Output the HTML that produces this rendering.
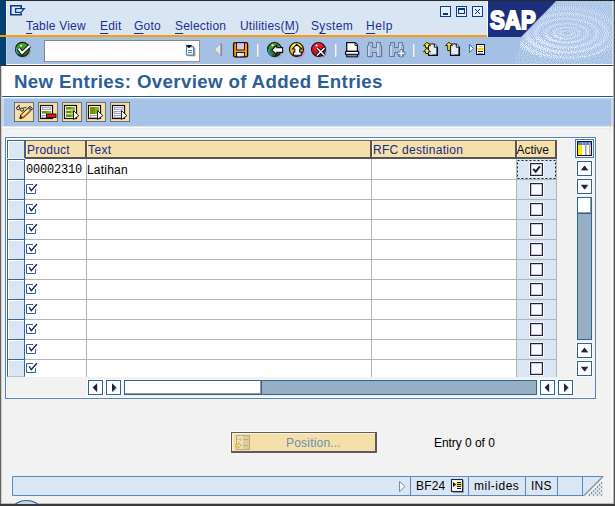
<!DOCTYPE html>
<html><head><meta charset="utf-8">
<style>
html,body{margin:0;padding:0}
body{width:615px;height:506px;position:relative;overflow:hidden;background:#f2f2f2;font-family:"Liberation Sans",sans-serif;font-size:12px;line-height:14px;color:#000;letter-spacing:0.200px}
.a{position:absolute}
.m{position:absolute;top:19px;color:#1a3090;white-space:nowrap}
.m u{text-decoration:underline;text-decoration-thickness:1px;text-underline-offset:3px}
.hc{position:absolute;top:140px;height:16px;background:#f4e0a8;border-top:1px solid #6a6a6a;border-bottom:2px solid #555;border-right:2px solid #555;padding-left:1px;box-shadow:inset 1px 0 0 #fff3cf;color:#16298c;box-sizing:content-box}
.hc span{position:absolute;left:2px;top:2px;white-space:nowrap}
.sel{position:absolute;left:7px;width:16px;height:19px;background:#dbe6f4;border:1px solid #34679b;border-bottom:0;box-shadow:inset 1px 1px 0 #fff}
.gl{position:absolute;background:#b4b4b4}
.cb{position:absolute;left:530px;width:11px;height:11px;background:#f8faff;border:1px solid #23233f;box-shadow:0 0 0 1px rgba(255,255,255,.75),inset 0 0 0 .5px #9a9aae}
.sb{position:absolute;width:13px;height:13px;background:#fff;border:1px solid #2f6496;box-shadow:0 0 0 1px #fafafa}
.tb{position:absolute;top:102px;width:18px;height:18px;background:#f4e0a8;border:1px solid #6e6e6e}
.ck{position:absolute;left:27px}
.st{position:absolute;top:477px;width:1px;height:18px;background:#5f88b8}
</style></head><body>

<!-- top chrome -->
<div class="a" style="left:0;top:0;width:615px;height:1px;background:#2b2b2b"></div>
<div class="a" style="left:6px;top:1px;width:609px;height:34px;background:#dae5f3"></div>
<div class="a" style="left:6px;top:37px;width:609px;height:27px;background:#a5c0e5"></div>
<div class="a" style="left:6px;top:64px;width:609px;height:1px;background:#fff"></div>
<div class="a" style="left:0;top:0;width:6px;height:65px;background:#03406f"></div>
<div class="a" style="left:6px;top:1px;width:1px;height:34px;background:#eef4fb"></div>
<div class="a" style="left:6px;top:37px;width:1px;height:27px;background:#bcd1ee"></div>
<div class="a" style="left:0;top:35px;width:488px;height:2px;background:#f99d09"></div>
<div class="a" style="left:0;top:65px;width:615px;height:1px;background:#3c3c3c"></div>

<!-- menu icon -->
<svg class="a" style="left:9px;top:4px" width="18" height="14" viewBox="0 0 18 14"><path d="M12.200 4V1.800H1.800V10.700H12.200V9" fill="none" stroke="#0c3b8c" stroke-width="1.600"/><path d="M6.600 4.600H15.200L12 8.400H6.600Z" fill="#e8eef8" stroke="#0c3b8c" stroke-width="1.300"/></svg>

<!-- menu -->
<div class="m" style="left:26px"><u>T</u>able View</div>
<div class="m" style="left:100px"><u>E</u>dit</div>
<div class="m" style="left:134px"><u>G</u>oto</div>
<div class="m" style="left:175px"><u>S</u>election</div>
<div class="m" style="left:240px">Utilities(<u>M</u>)</div>
<div class="m" style="left:311px;letter-spacing:.35px">S<u>y</u>stem</div>
<div class="m" style="left:366px;letter-spacing:.55px"><u>H</u>elp</div>

<!-- window buttons -->
<svg class="a" style="left:440px;top:6px" width="46" height="13" viewBox="0 0 46 13">
<g fill="#e7eef8" stroke="#0f3f8c" stroke-width="1"><rect x=".5" y=".5" width="10" height="10"/><rect x="16.500" y=".5" width="10" height="10"/><rect x="32.500" y=".5" width="10" height="10"/></g>
<rect x="3" y="7" width="5" height="2" fill="#0f3380"/>
<rect x="18.500" y="2.500" width="6" height="5" fill="#e2eaf6" stroke="#0f3380"/><rect x="18" y="2" width="7" height="2" fill="#0f3380"/>
<path d="M35 3l5 5M40 3l-5 5" stroke="#0f3380" stroke-width="1"/>
</svg>
<div class="a" style="left:487px;top:1px;width:1px;height:36px;background:#f4f8fd"></div>

<!-- SAP logo + ripples -->
<svg class="a" style="left:488px;top:1px" width="127" height="64" viewBox="0 0 127 64">
<defs><linearGradient id="rg" x1="0" y1="0" x2="1" y2="0"><stop offset="0" stop-color="#a5c0e5"/><stop offset="0.200" stop-color="#aac4e7"/><stop offset="1" stop-color="#a9c3e6"/></linearGradient></defs>
<rect x="0" y="0" width="127" height="63" fill="#a5c0e5"/>
<polygon points="68,0 127,0 127,63 22,63 33,36" fill="url(#rg)"/>
<path d="M71 1.5h1M73 1.5h1M75 1.5h1M77 1.5h1M79 1.5h1M81 1.5h1M83 1.5h1M85 1.5h1M87 1.5h1M89 1.5h1M91 1.5h1M93 1.5h1M95 1.5h1M97 1.5h1M99 1.5h1M101 1.5h1M103 1.5h1M105 1.5h1M107 1.5h1M109 1.5h1M111 1.5h1M113 1.5h1M115 1.5h1M117 1.5h1M119 1.5h1M121 1.5h1M123 1.5h1M125 1.5h1M126 2.5h1M69 3.5h1M71 3.5h1M73 3.5h1M75 3.5h1M77 3.5h1M79 3.5h1M81 3.5h1M83 3.5h1M85 3.5h1M87 3.5h1M89 3.5h1M91 3.5h1M93 3.5h1M96 3.5h1M98 3.5h1M100 3.5h1M102 3.5h1M104 3.5h1M106 3.5h1M108 3.5h1M110 3.5h1M112 3.5h1M115 3.5h1M117 3.5h1M119 3.5h1M121 3.5h1M123 3.5h1M67 4.5h1M94 4.5h1M114 4.5h1M124 4.5h1M69 5.5h1M71 5.5h1M73 5.5h1M75 5.5h1M77 5.5h1M79 5.5h1M81 5.5h1M83 5.5h1M85 5.5h1M87 5.5h1M89 5.5h1M91 5.5h1M96 5.5h1M99 5.5h1M102 5.5h1M104 5.5h1M107 5.5h1M109 5.5h1M112 5.5h1M116 5.5h1M119 5.5h1M121 5.5h1M126 5.5h1M65 6.5h1M67 6.5h1M69 6.5h1M71 6.5h1M73 6.5h1M75 6.5h1M77 6.5h1M79 6.5h1M81 6.5h1M83 6.5h1M85 6.5h1M87 6.5h1M90 6.5h1M92 6.5h1M94 6.5h1M97 6.5h1M100 6.5h1M105 6.5h1M110 6.5h1M114 6.5h1M123 6.5h1M63 7.5h1M65 7.5h1M67 7.5h1M69 7.5h1M71 7.5h1M73 7.5h1M75 7.5h1M77 7.5h2M80 7.5h2M83 7.5h1M85 7.5h1M87 7.5h2M90 7.5h1M93 7.5h1M95 7.5h1M98 7.5h1M102 7.5h1M107 7.5h1M116 7.5h1M118 7.5h1M121 7.5h1M125 7.5h1M61 8.5h1M63 8.5h1M65 8.5h1M67 8.5h2M70 8.5h1M72 8.5h1M74 8.5h2M77 8.5h1M79 8.5h1M81 8.5h1M83 8.5h2M86 8.5h1M88 8.5h1M90 8.5h3M94 8.5h1M96 8.5h1M98 8.5h1M100 8.5h1M103 8.5h1M105 8.5h1M108 8.5h1M111 8.5h1M113 8.5h1M123 8.5h1M61 9.5h1M63 9.5h1M65 9.5h1M67 9.5h1M69 9.5h1M71 9.5h1M73 9.5h1M76 9.5h1M78 9.5h1M81 9.5h1M85 9.5h1M87 9.5h1M89 9.5h1M92 9.5h1M94 9.5h1M96 9.5h2M99 9.5h1M101 9.5h2M104 9.5h1M106 9.5h1M110 9.5h1M115 9.5h1M117 9.5h1M119 9.5h1M121 9.5h1M126 9.5h1M60 10.5h1M63 10.5h1M65 10.5h1M68 10.5h1M71 10.5h1M74 10.5h1M76 10.5h1M79 10.5h1M82 10.5h1M84 10.5h1M88 10.5h1M90 10.5h1M93 10.5h1M95 10.5h1M97 10.5h1M99 10.5h2M102 10.5h1M104 10.5h1M107 10.5h1M109 10.5h1M112 10.5h1M123 10.5h1M59 11.5h1M61 11.5h1M64 11.5h1M66 11.5h1M69 11.5h1M71 11.5h1M73 11.5h1M75 11.5h1M77 11.5h1M79 11.5h1M81 11.5h1M83 11.5h1M85 11.5h1M87 11.5h1M91 11.5h1M94 11.5h1M96 11.5h1M98 11.5h1M101 11.5h1M103 11.5h1M105 11.5h2M108 11.5h1M110 11.5h1M113 11.5h1M115 11.5h1M117 11.5h1M120 11.5h1M124 11.5h1M62 12.5h1M64 12.5h1M66 12.5h3M70 12.5h15M86 12.5h5M92 12.5h1M94 12.5h1M99 12.5h1M101 12.5h1M103 12.5h2M106 12.5h1M108 12.5h2M111 12.5h1M113 12.5h1M119 12.5h1M122 12.5h1M57 13.5h1M59 13.5h3M63 13.5h3M67 13.5h4M72 13.5h1M74 13.5h2M77 13.5h1M79 13.5h3M83 13.5h4M88 13.5h6M95 13.5h3M99 13.5h1M102 13.5h1M105 13.5h1M107 13.5h1M109 13.5h1M111 13.5h2M114 13.5h1M116 13.5h1M118 13.5h1M125 13.5h1M56 14.5h1M58 14.5h2M61 14.5h7M69 14.5h1M71 14.5h3M75 14.5h1M77 14.5h2M81 14.5h1M83 14.5h1M85 14.5h1M87 14.5h2M90 14.5h1M92 14.5h4M97 14.5h2M100 14.5h1M102 14.5h1M104 14.5h1M107 14.5h1M109 14.5h1M111 14.5h1M113 14.5h1M115 14.5h1M117 14.5h1M120 14.5h1M123 14.5h1M54 15.5h1M56 15.5h7M64 15.5h1M67 15.5h1M69 15.5h1M74 15.5h1M79 15.5h1M81 15.5h1M84 15.5h1M86 15.5h1M89 15.5h1M91 15.5h1M93 15.5h1M95 15.5h7M103 15.5h1M105 15.5h1M108 15.5h1M111 15.5h1M113 15.5h1M115 15.5h1M117 15.5h1M119 15.5h1M122 15.5h1M126 15.5h1M53 16.5h1M55 16.5h3M59 16.5h1M61 16.5h1M63 16.5h1M65 16.5h1M68 16.5h1M70 16.5h2M73 16.5h1M75 16.5h3M79 16.5h1M82 16.5h1M84 16.5h1M87 16.5h1M89 16.5h1M91 16.5h1M94 16.5h1M96 16.5h1M98 16.5h1M100 16.5h4M105 16.5h1M107 16.5h1M109 16.5h1M112 16.5h1M114 16.5h2M117 16.5h1M119 16.5h1M121 16.5h1M124 16.5h1M52 17.5h4M57 17.5h1M59 17.5h1M61 17.5h1M65 17.5h1M67 17.5h1M69 17.5h1M71 17.5h3M75 17.5h1M77 17.5h7M85 17.5h2M88 17.5h1M90 17.5h1M92 17.5h1M94 17.5h1M96 17.5h1M98 17.5h1M100 17.5h1M102 17.5h6M110 17.5h1M112 17.5h1M115 17.5h1M117 17.5h2M120 17.5h1M122 17.5h1M52 18.5h1M55 18.5h1M57 18.5h1M59 18.5h1M62 18.5h3M66 18.5h6M73 18.5h5M79 18.5h2M82 18.5h8M91 18.5h1M93 18.5h1M95 18.5h1M98 18.5h1M100 18.5h1M102 18.5h1M104 18.5h2M107 18.5h3M111 18.5h1M114 18.5h1M116 18.5h1M118 18.5h1M120 18.5h1M122 18.5h1M124 18.5h1M126 18.5h1M51 19.5h1M53 19.5h1M55 19.5h1M58 19.5h1M60 19.5h3M64 19.5h4M69 19.5h1M71 19.5h2M74 19.5h1M77 19.5h1M81 19.5h1M85 19.5h1M87 19.5h1M89 19.5h6M96 19.5h2M99 19.5h1M101 19.5h1M103 19.5h1M105 19.5h4M110 19.5h1M112 19.5h1M115 19.5h1M118 19.5h1M120 19.5h2M123 19.5h1M125 19.5h1M51 20.5h1M54 20.5h1M56 20.5h2M59 20.5h6M66 20.5h1M68 20.5h1M75 20.5h1M79 20.5h1M82 20.5h1M84 20.5h1M88 20.5h1M90 20.5h1M92 20.5h1M94 20.5h4M99 20.5h1M101 20.5h1M104 20.5h1M107 20.5h7M116 20.5h1M118 20.5h1M120 20.5h1M122 20.5h1M124 20.5h1M49 21.5h1M52 21.5h1M54 21.5h2M57 21.5h4M63 21.5h1M69 21.5h1M71 21.5h1M73 21.5h1M76 21.5h1M78 21.5h1M80 21.5h1M83 21.5h1M86 21.5h1M92 21.5h1M94 21.5h1M96 21.5h5M102 21.5h1M105 21.5h1M108 21.5h1M110 21.5h2M113 21.5h2M116 21.5h1M120 21.5h1M122 21.5h2M125 21.5h1M50 22.5h1M52 22.5h1M54 22.5h5M60 22.5h1M62 22.5h1M65 22.5h1M67 22.5h1M69 22.5h1M71 22.5h2M74 22.5h9M84 22.5h2M87 22.5h2M90 22.5h1M94 22.5h1M97 22.5h1M99 22.5h6M106 22.5h1M108 22.5h1M110 22.5h3M114 22.5h2M117 22.5h1M119 22.5h1M121 22.5h1M123 22.5h1M125 22.5h2M48 23.5h1M51 23.5h4M56 23.5h1M58 23.5h1M61 23.5h1M64 23.5h1M66 23.5h9M76 23.5h1M78 23.5h1M80 23.5h1M82 23.5h8M91 23.5h2M96 23.5h1M99 23.5h1M101 23.5h1M103 23.5h2M106 23.5h1M109 23.5h1M111 23.5h4M116 23.5h1M118 23.5h1M122 23.5h1M124 23.5h1M126 23.5h1M47 24.5h1M49 24.5h2M52 24.5h4M57 24.5h1M60 24.5h1M63 24.5h5M69 24.5h1M72 24.5h1M75 24.5h1M77 24.5h1M80 24.5h1M82 24.5h1M86 24.5h1M88 24.5h1M90 24.5h2M93 24.5h2M97 24.5h1M100 24.5h1M102 24.5h4M107 24.5h2M111 24.5h1M113 24.5h4M118 24.5h1M120 24.5h1M123 24.5h1M125 24.5h1M46 25.5h1M49 25.5h4M54 25.5h1M58 25.5h1M61 25.5h3M65 25.5h1M67 25.5h1M69 25.5h1M71 25.5h1M74 25.5h1M78 25.5h1M83 25.5h1M85 25.5h1M88 25.5h2M91 25.5h5M98 25.5h1M101 25.5h1M103 25.5h1M105 25.5h3M109 25.5h1M112 25.5h1M114 25.5h1M116 25.5h2M119 25.5h1M121 25.5h1M123 25.5h1M125 25.5h1M44 26.5h1M47 26.5h2M50 26.5h3M55 26.5h1M57 26.5h1M59 26.5h6M66 26.5h1M72 26.5h2M75 26.5h9M85 26.5h1M87 26.5h1M90 26.5h1M92 26.5h1M94 26.5h4M99 26.5h1M102 26.5h1M104 26.5h3M108 26.5h1M110 26.5h1M112 26.5h1M114 26.5h5M120 26.5h1M124 26.5h1M126 26.5h1M45 27.5h1M47 27.5h4M52 27.5h1M54 27.5h1M57 27.5h1M59 27.5h3M63 27.5h1M67 27.5h9M77 27.5h1M79 27.5h1M81 27.5h1M83 27.5h4M88 27.5h1M91 27.5h1M93 27.5h1M95 27.5h2M98 27.5h1M100 27.5h1M103 27.5h1M105 27.5h1M107 27.5h3M111 27.5h1M113 27.5h1M115 27.5h2M118 27.5h2M121 27.5h1M123 27.5h1M125 27.5h1M42 28.5h1M44 28.5h1M46 28.5h1M48 28.5h3M52 28.5h1M55 28.5h1M57 28.5h3M61 28.5h1M64 28.5h1M66 28.5h1M68 28.5h3M72 28.5h1M80 28.5h1M83 28.5h1M86 28.5h4M93 28.5h1M95 28.5h1M97 28.5h3M101 28.5h1M104 28.5h1M106 28.5h4M111 28.5h1M114 28.5h1M116 28.5h3M120 28.5h1M124 28.5h1M126 28.5h1M42 29.5h1M45 29.5h4M50 29.5h2M54 29.5h1M56 29.5h2M59 29.5h2M62 29.5h1M64 29.5h1M66 29.5h3M70 29.5h1M73 29.5h1M75 29.5h5M81 29.5h2M84 29.5h1M87 29.5h1M89 29.5h3M95 29.5h1M97 29.5h2M100 29.5h1M102 29.5h1M105 29.5h1M107 29.5h1M109 29.5h2M112 29.5h1M114 29.5h2M117 29.5h3M121 29.5h2M125 29.5h1M40 30.5h2M43 30.5h1M45 30.5h1M47 30.5h3M51 30.5h1M55 30.5h1M57 30.5h3M61 30.5h1M64 30.5h4M69 30.5h1M71 30.5h6M78 30.5h1M80 30.5h2M83 30.5h2M86 30.5h1M88 30.5h6M96 30.5h1M98 30.5h3M102 30.5h1M105 30.5h1M107 30.5h4M112 30.5h1M115 30.5h2M118 30.5h2M123 30.5h1M126 30.5h1M39 31.5h1M41 31.5h1M44 31.5h1M46 31.5h4M51 31.5h1M53 31.5h1M55 31.5h5M61 31.5h1M63 31.5h1M65 31.5h3M69 31.5h2M72 31.5h2M79 31.5h1M82 31.5h1M84 31.5h3M89 31.5h1M91 31.5h1M93 31.5h1M95 31.5h1M97 31.5h3M101 31.5h1M104 31.5h1M106 31.5h3M110 31.5h2M113 31.5h1M115 31.5h1M117 31.5h5M124 31.5h1M126 31.5h1M38 32.5h3M42 32.5h1M44 32.5h2M47 32.5h2M50 32.5h1M54 32.5h1M56 32.5h2M59 32.5h1M62 32.5h1M64 32.5h3M68 32.5h1M70 32.5h4M75 32.5h1M77 32.5h1M82 32.5h3M86 32.5h2M89 32.5h4M96 32.5h1M98 32.5h3M102 32.5h1M105 32.5h1M107 32.5h3M111 32.5h1M114 32.5h1M116 32.5h3M120 32.5h1M122 32.5h1M125 32.5h1M37 33.5h1M39 33.5h2M42 33.5h1M45 33.5h7M53 33.5h1M55 33.5h1M57 33.5h4M63 33.5h1M65 33.5h4M70 33.5h1M72 33.5h4M79 33.5h1M81 33.5h1M83 33.5h3M87 33.5h1M89 33.5h1M91 33.5h1M93 33.5h1M95 33.5h1M97 33.5h1M99 33.5h2M102 33.5h1M106 33.5h1M108 33.5h3M112 33.5h1M114 33.5h1M116 33.5h3M120 33.5h1M123 33.5h1M126 33.5h1M37 34.5h5M43 34.5h1M45 34.5h1M47 34.5h2M50 34.5h1M52 34.5h1M55 34.5h5M61 34.5h1M64 34.5h3M68 34.5h2M71 34.5h1M73 34.5h11M85 34.5h1M87 34.5h6M95 34.5h1M97 34.5h4M103 34.5h1M105 34.5h1M107 34.5h2M110 34.5h1M112 34.5h1M114 34.5h1M116 34.5h1M118 34.5h3M122 34.5h1M124 34.5h1M126 34.5h1M36 35.5h2M39 35.5h2M42 35.5h1M44 35.5h1M46 35.5h1M48 35.5h3M52 35.5h1M57 35.5h1M59 35.5h2M62 35.5h1M65 35.5h1M67 35.5h1M69 35.5h2M72 35.5h1M76 35.5h1M78 35.5h1M80 35.5h1M83 35.5h1M86 35.5h2M89 35.5h2M93 35.5h1M95 35.5h4M100 35.5h1M102 35.5h1M105 35.5h6M112 35.5h1M114 35.5h5M120 35.5h1M122 35.5h1M125 35.5h1M35 36.5h1M37 36.5h3M41 36.5h2M44 36.5h1M46 36.5h2M49 36.5h2M53 36.5h1M55 36.5h1M57 36.5h1M59 36.5h1M61 36.5h2M67 36.5h3M71 36.5h1M73 36.5h2M76 36.5h1M79 36.5h1M81 36.5h2M84 36.5h6M91 36.5h1M93 36.5h1M95 36.5h1M97 36.5h2M100 36.5h1M103 36.5h1M105 36.5h1M107 36.5h2M110 36.5h1M113 36.5h1M116 36.5h4M121 36.5h1M124 36.5h1M126 36.5h1M37 37.5h1M39 37.5h2M42 37.5h2M45 37.5h1M47 37.5h1M49 37.5h4M54 37.5h1M57 37.5h1M60 37.5h1M62 37.5h1M64 37.5h1M70 37.5h1M72 37.5h2M75 37.5h12M90 37.5h1M93 37.5h5M99 37.5h1M102 37.5h1M104 37.5h5M110 37.5h1M112 37.5h1M114 37.5h4M119 37.5h1M122 37.5h1M125 37.5h1M34 38.5h1M36 38.5h1M39 38.5h2M42 38.5h2M46 38.5h1M49 38.5h1M51 38.5h2M54 38.5h1M56 38.5h1M59 38.5h4M64 38.5h3M68 38.5h1M71 38.5h1M74 38.5h1M76 38.5h4M81 38.5h1M83 38.5h1M87 38.5h1M89 38.5h1M91 38.5h5M97 38.5h1M100 38.5h1M103 38.5h1M105 38.5h2M108 38.5h1M110 38.5h1M112 38.5h1M114 38.5h2M117 38.5h2M120 38.5h1M123 38.5h1M125 38.5h2M34 39.5h1M37 39.5h1M39 39.5h7M48 39.5h1M50 39.5h1M53 39.5h2M57 39.5h1M62 39.5h2M65 39.5h1M67 39.5h1M69 39.5h1M71 39.5h1M73 39.5h1M82 39.5h1M84 39.5h1M86 39.5h1M88 39.5h6M95 39.5h1M97 39.5h1M99 39.5h1M101 39.5h7M109 39.5h1M111 39.5h1M113 39.5h5M119 39.5h1M121 39.5h1M123 39.5h1M125 39.5h1M32 40.5h1M38 40.5h1M41 40.5h1M43 40.5h1M46 40.5h1M48 40.5h1M50 40.5h1M52 40.5h2M55 40.5h2M58 40.5h1M60 40.5h1M64 40.5h3M68 40.5h2M71 40.5h2M74 40.5h3M79 40.5h3M83 40.5h3M87 40.5h3M91 40.5h1M93 40.5h1M96 40.5h1M100 40.5h1M102 40.5h3M106 40.5h1M108 40.5h1M111 40.5h3M115 40.5h2M118 40.5h1M122 40.5h1M124 40.5h1M126 40.5h1M34 41.5h1M36 41.5h1M38 41.5h1M40 41.5h1M42 41.5h1M44 41.5h3M49 41.5h1M51 41.5h1M53 41.5h2M56 41.5h2M59 41.5h1M62 41.5h1M67 41.5h1M69 41.5h2M72 41.5h1M74 41.5h6M81 41.5h2M84 41.5h4M89 41.5h1M92 41.5h1M95 41.5h1M97 41.5h8M106 41.5h1M109 41.5h2M112 41.5h4M117 41.5h1M120 41.5h1M122 41.5h1M124 41.5h2M32 42.5h1M34 42.5h1M37 42.5h1M40 42.5h1M42 42.5h3M46 42.5h3M50 42.5h1M52 42.5h1M54 42.5h2M57 42.5h3M62 42.5h1M64 42.5h1M68 42.5h1M72 42.5h1M74 42.5h1M78 42.5h2M81 42.5h1M83 42.5h1M88 42.5h1M93 42.5h1M95 42.5h1M99 42.5h2M103 42.5h1M106 42.5h1M108 42.5h1M110 42.5h4M115 42.5h1M118 42.5h1M120 42.5h1M122 42.5h1M124 42.5h1M126 42.5h1M32 43.5h1M34 43.5h1M37 43.5h1M40 43.5h1M44 43.5h2M47 43.5h1M50 43.5h1M53 43.5h1M55 43.5h1M57 43.5h1M59 43.5h3M63 43.5h1M65 43.5h2M70 43.5h1M75 43.5h1M80 43.5h1M84 43.5h1M86 43.5h1M90 43.5h2M93 43.5h2M96 43.5h5M102 43.5h1M104 43.5h1M106 43.5h5M112 43.5h1M114 43.5h1M116 43.5h1M119 43.5h1M121 43.5h1M123 43.5h1M125 43.5h1M32 44.5h1M34 44.5h1M38 44.5h1M41 44.5h1M43 44.5h1M46 44.5h3M50 44.5h1M53 44.5h1M56 44.5h1M58 44.5h1M60 44.5h1M62 44.5h4M67 44.5h1M69 44.5h1M71 44.5h2M74 44.5h1M77 44.5h1M79 44.5h1M82 44.5h1M85 44.5h1M87 44.5h3M91 44.5h2M94 44.5h4M99 44.5h1M101 44.5h1M103 44.5h1M105 44.5h1M108 44.5h3M112 44.5h2M115 44.5h1M117 44.5h1M119 44.5h1M121 44.5h2M124 44.5h1M126 44.5h1M35 45.5h2M38 45.5h2M42 45.5h1M44 45.5h1M46 45.5h1M48 45.5h5M54 45.5h1M61 45.5h1M64 45.5h3M68 45.5h2M71 45.5h2M75 45.5h4M80 45.5h9M90 45.5h4M95 45.5h1M98 45.5h1M100 45.5h1M102 45.5h1M104 45.5h5M110 45.5h2M117 45.5h1M121 45.5h1M123 45.5h1M32 46.5h1M37 46.5h1M39 46.5h2M45 46.5h1M47 46.5h2M50 46.5h1M52 46.5h2M55 46.5h1M57 46.5h2M60 46.5h1M62 46.5h1M66 46.5h1M68 46.5h8M77 46.5h6M84 46.5h3M88 46.5h3M92 46.5h1M94 46.5h1M96 46.5h1M98 46.5h1M100 46.5h1M102 46.5h3M106 46.5h1M108 46.5h2M112 46.5h1M114 46.5h2M119 46.5h2M122 46.5h1M125 46.5h1M34 47.5h1M36 47.5h1M38 47.5h1M40 47.5h1M42 47.5h1M44 47.5h1M48 47.5h1M50 47.5h2M53 47.5h3M57 47.5h2M60 47.5h1M62 47.5h1M64 47.5h1M69 47.5h1M72 47.5h1M75 47.5h1M77 47.5h1M79 47.5h1M82 47.5h1M84 47.5h1M86 47.5h1M88 47.5h1M91 47.5h1M94 47.5h1M96 47.5h1M98 47.5h5M104 47.5h1M106 47.5h2M110 47.5h1M113 47.5h1M116 47.5h3M121 47.5h1M33 48.5h1M38 48.5h1M41 48.5h1M47 48.5h1M50 48.5h1M52 48.5h1M55 48.5h2M58 48.5h3M63 48.5h1M65 48.5h1M67 48.5h1M70 48.5h1M72 48.5h1M75 48.5h1M77 48.5h1M80 48.5h1M82 48.5h1M86 48.5h1M89 48.5h1M92 48.5h2M95 48.5h5M101 48.5h1M103 48.5h1M105 48.5h1M108 48.5h1M111 48.5h1M113 48.5h1M115 48.5h2M119 48.5h1M122 48.5h1M124 48.5h1M31 49.5h1M40 49.5h1M42 49.5h2M45 49.5h1M47 49.5h1M53 49.5h1M55 49.5h1M57 49.5h2M60 49.5h2M63 49.5h1M65 49.5h3M69 49.5h1M71 49.5h1M73 49.5h1M75 49.5h1M78 49.5h1M80 49.5h1M83 49.5h2M86 49.5h1M88 49.5h9M99 49.5h1M101 49.5h2M104 49.5h1M107 49.5h1M109 49.5h1M111 49.5h1M114 49.5h1M116 49.5h1M118 49.5h1M120 49.5h1M35 50.5h1M40 50.5h1M42 50.5h1M44 50.5h1M47 50.5h2M50 50.5h1M52 50.5h1M55 50.5h1M59 50.5h1M61 50.5h4M66 50.5h5M72 50.5h8M81 50.5h11M93 50.5h2M97 50.5h2M100 50.5h1M103 50.5h1M106 50.5h1M109 50.5h2M112 50.5h2M115 50.5h1M117 50.5h1M125 50.5h1M37 51.5h1M42 51.5h1M44 51.5h1M53 51.5h1M56 51.5h1M59 51.5h1M63 51.5h1M65 51.5h2M68 51.5h5M74 51.5h2M77 51.5h6M84 51.5h3M88 51.5h1M90 51.5h1M92 51.5h1M95 51.5h1M99 51.5h1M102 51.5h1M104 51.5h1M106 51.5h2M109 51.5h1M111 51.5h1M113 51.5h1M120 51.5h1M123 51.5h1M31 52.5h1M34 52.5h1M39 52.5h1M43 52.5h1M46 52.5h1M48 52.5h2M52 52.5h1M54 52.5h1M56 52.5h1M58 52.5h1M62 52.5h1M65 52.5h1M67 52.5h1M69 52.5h1M71 52.5h1M73 52.5h1M75 52.5h1M77 52.5h1M79 52.5h1M81 52.5h1M83 52.5h1M85 52.5h1M87 52.5h1M89 52.5h1M91 52.5h1M93 52.5h1M96 52.5h1M98 52.5h1M100 52.5h1M102 52.5h1M104 52.5h1M106 52.5h1M110 52.5h1M114 52.5h1M116 52.5h1M41 53.5h1M45 53.5h1M47 53.5h1M50 53.5h2M53 53.5h1M57 53.5h1M59 53.5h1M61 53.5h1M70 53.5h1M74 53.5h1M77 53.5h1M82 53.5h1M84 53.5h1M88 53.5h1M93 53.5h1M95 53.5h1M97 53.5h1M99 53.5h1M101 53.5h1M103 53.5h2M106 53.5h2M109 53.5h1M111 53.5h1M119 53.5h1M30 54.5h1M33 54.5h1M36 54.5h1M39 54.5h1M49 54.5h1M53 54.5h1M55 54.5h1M57 54.5h1M60 54.5h1M62 54.5h1M64 54.5h2M67 54.5h2M71 54.5h1M73 54.5h1M76 54.5h1M78 54.5h1M80 54.5h1M85 54.5h1M87 54.5h1M89 54.5h2M92 54.5h1M94 54.5h1M96 54.5h1M98 54.5h1M100 54.5h1M103 54.5h1M105 54.5h1M113 54.5h1M117 54.5h1M122 54.5h1M124 54.5h1M44 55.5h1M51 55.5h1M54 55.5h1M57 55.5h2M60 55.5h2M65 55.5h2M69 55.5h1M71 55.5h1M73 55.5h1M75 55.5h1M77 55.5h1M79 55.5h1M81 55.5h3M85 55.5h1M87 55.5h1M91 55.5h1M94 55.5h2M97 55.5h2M100 55.5h1M102 55.5h1M106 55.5h1M108 55.5h1M111 55.5h1M31 56.5h1M36 56.5h1M42 56.5h1M47 56.5h1M53 56.5h1M61 56.5h1M63 56.5h1M67 56.5h1M69 56.5h1M72 56.5h2M76 56.5h1M80 56.5h1M84 56.5h1M86 56.5h1M88 56.5h1M90 56.5h1M92 56.5h1M94 56.5h1M96 56.5h1M99 56.5h1M104 56.5h1M115 56.5h1M119 56.5h1M28 57.5h1M34 57.5h1M39 57.5h1M50 57.5h1M64 57.5h1M66 57.5h1M70 57.5h1M72 57.5h1M74 57.5h1M76 57.5h1M78 57.5h2M81 57.5h2M84 57.5h2M87 57.5h2M90 57.5h1M92 57.5h1M97 57.5h1M102 57.5h1M122 57.5h1M125 57.5h1M44 58.5h1M54 58.5h1M58 58.5h1M71 58.5h1M74 58.5h1M77 58.5h1M80 58.5h1M83 58.5h1M94 58.5h1M100 58.5h1M108 58.5h1M111 58.5h1M113 58.5h1M117 58.5h1M31 59.5h1M35 59.5h1M40 59.5h1M47 59.5h1M52 59.5h1M61 59.5h1M65 59.5h1M67 59.5h1M69 59.5h1M76 59.5h1M86 59.5h1M88 59.5h1M90 59.5h1M105 59.5h1M120 59.5h1M124 59.5h1M27 60.5h1M38 60.5h1M43 60.5h1M50 60.5h1M56 60.5h1M73 60.5h1M79 60.5h1M82 60.5h1M93 60.5h1M96 60.5h1M99 60.5h1M110 60.5h1M115 60.5h1M122 60.5h1M29 61.5h1M33 61.5h1M48 61.5h1M54 61.5h1M59 61.5h1M63 61.5h1M71 61.5h1M86 61.5h1M102 61.5h1M107 61.5h1M118 61.5h1M36 62.5h1M42 62.5h1M46 62.5h1M68 62.5h1M76 62.5h1M84 62.5h1M91 62.5h1M97 62.5h1M105 62.5h1M113 62.5h1" stroke="#cbdcf2" stroke-width="1" fill="none"/><path d="M67 34.5h1M58 35.5h1M68 35.5h1M40 36.5h1M48 36.5h1M51 36.5h1M60 36.5h1M63 36.5h1M66 36.5h1M70 36.5h1M72 36.5h1M58 37.5h1M61 37.5h1M74 37.5h1M38 38.5h1M41 38.5h1M44 38.5h1M48 38.5h1M50 38.5h1M53 38.5h1M63 38.5h1M72 38.5h1M52 39.5h1M56 39.5h1M61 39.5h1M64 39.5h1M66 39.5h1M68 39.5h1M35 40.5h1M40 40.5h1M42 40.5h1M45 40.5h1M51 40.5h1M54 40.5h1M67 40.5h1M70 40.5h1M77 40.5h1M86 40.5h1M90 40.5h1M33 41.5h1M43 41.5h1M48 41.5h1M55 41.5h1M58 41.5h1M71 41.5h1M73 41.5h1M80 41.5h1M83 41.5h1M38 42.5h1M45 42.5h1M53 42.5h1M56 42.5h1M60 42.5h1M76 42.5h1M97 42.5h1M101 42.5h1M33 43.5h1M35 43.5h1M42 43.5h1M46 43.5h1M48 43.5h1M58 43.5h1M62 43.5h1M64 43.5h1M95 43.5h1M111 43.5h1M36 44.5h1M40 44.5h1M45 44.5h1M49 44.5h1M51 44.5h1M59 44.5h1M61 44.5h1M66 44.5h1M68 44.5h1M93 44.5h1M107 44.5h1M33 45.5h1M37 45.5h1M47 45.5h1M53 45.5h1M56 45.5h1M63 45.5h1M70 45.5h1M73 45.5h1M89 45.5h1M119 45.5h1M35 46.5h1M38 46.5h1M42 46.5h1M49 46.5h1M51 46.5h1M54 46.5h1M65 46.5h1M67 46.5h1M76 46.5h1M83 46.5h1M87 46.5h1M105 46.5h1M117 46.5h1M124 46.5h1M39 47.5h1M41 47.5h1M52 47.5h1M56 47.5h1M59 47.5h1M70 47.5h1M74 47.5h1M80 47.5h1M103 47.5h1M36 48.5h1M40 48.5h1M43 48.5h1M45 48.5h1M48 48.5h1M54 48.5h1M57 48.5h1M61 48.5h1M100 48.5h1M114 48.5h1M38 49.5h1M46 49.5h1M52 49.5h1M59 49.5h1M62 49.5h1M64 49.5h1M68 49.5h1M97 49.5h1M112 49.5h1M41 50.5h1M43 50.5h1M45 50.5h1M49 50.5h1M57 50.5h1M65 50.5h1M71 50.5h1M92 50.5h1M95 50.5h1M46 51.5h1M48 51.5h1M51 51.5h1M55 51.5h1M61 51.5h1M67 51.5h1M73 51.5h1M76 51.5h1M83 51.5h1M87 51.5h1M110 51.5h1M44 52.5h1M50 52.5h1M53 52.5h1M70 52.5h1M80 52.5h1M108 52.5h1M48 53.5h1M52 53.5h1M55 53.5h1M58 53.5h1M63 53.5h1M105 53.5h1M56 54.5h1M59 54.5h1M61 54.5h1M66 54.5h1M101 54.5h1M52 55.5h1M63 55.5h1M68 55.5h1M72 55.5h1M89 55.5h1M92 55.5h1M96 55.5h1M56 56.5h1M59 56.5h1M65 56.5h1M70 56.5h1M75 56.5h1M78 56.5h1M82 56.5h1M85 56.5h1M62 57.5h1M68 57.5h1" stroke="#f0f5fc" stroke-width="1" fill="none"/>
<polygon points="0,0 68,0 33,36 0,36" fill="#1b2f7c"/>
<text x="2" y="27.700" font-family="Liberation Sans,sans-serif" font-weight="bold" font-size="26" fill="#fff" stroke="#fff" stroke-width="2.100" stroke-linejoin="miter" textLength="45.800" lengthAdjust="spacingAndGlyphs">SAP</text>
</svg>

<!-- toolbar -->
<div class="a" style="left:44px;top:40px;width:156px;height:22px;background:#fff;border:1px solid #959595;border-top-color:#858585;border-left-color:#858585;box-sizing:border-box"></div>
<svg class="a" style="left:14px;top:41px" width="20" height="18" viewBox="0 0 20 18"><defs><linearGradient id="gg" x1="0" y1="0" x2="0" y2="1"><stop offset="0" stop-color="#56b41e"/><stop offset=".55" stop-color="#2f8a2a"/><stop offset="1" stop-color="#17601e"/></linearGradient></defs><circle cx="10" cy="10.300" r="7" fill="#aea2d8"/><circle cx="8.400" cy="8.400" r="7" fill="url(#gg)" stroke="#0a1a0c" stroke-width="1.100"/><path d="M2.500 7a6 6 0 0 0 2 6" stroke="#2aa0a0" stroke-width="1.400" fill="none"/><circle cx="7" cy="4.800" r="1" fill="#fff"/><path d="M4.700 7.700l3.300 4.400l7.800-7.400" fill="none" stroke="#111" stroke-width="3.800"/><path d="M4.700 7.700l3.300 4.400l7.800-7.400" fill="none" stroke="#fff" stroke-width="2"/></svg>
<svg class="a" style="left:185px;top:44px" width="12" height="13" viewBox="0 0 12 13"><path d="M9.700 3.500v8.200h-7.200" stroke="#8e939c" stroke-width="1.200" fill="none"/><rect x="1.500" y="2.800" width="7" height="8.200" fill="#fff" stroke="#4a7fb5" stroke-width="1.100"/><path d="M3 6.500h4M3 8.500h4" stroke="#4a7fb5"/><path d="M.6 1h6.800l-3.400 3.300z" fill="#0c0c0c"/></svg>
<svg class="a" style="left:213px;top:42px" width="12" height="15" viewBox="0 0 12 15"><path d="M7.500 1.500v12l-6.300-6z" fill="#e6e6e6" stroke="#a8a8a8" stroke-width=".9"/><path d="M8.500 1.500v12.500" stroke="#8c8c94" stroke-width="1.300"/></svg>
<svg class="a" style="left:232px;top:41px" width="17" height="17" viewBox="0 0 17 17"><rect x="1.600" y="1.600" width="14" height="14.300" rx="1.500" fill="#f79d0a" stroke="#140e06" stroke-width="1.300"/><rect x="4.500" y="1.700" width="8" height="7.300" fill="#d9c3e3" stroke="#140e06" stroke-width=".9"/><rect x="4.500" y="11.500" width="8" height="4.300" fill="#e6d6ee" stroke="#140e06" stroke-width=".9"/><rect x="6" y="12.200" width="2.200" height="3" fill="#fff"/></svg>
<div class="a" style="left:257px;top:44px;width:1px;height:13px;background:#f6f6f6"></div><div class="a" style="left:258px;top:44px;width:1px;height:13px;background:#d2d5dc"></div><div class="a" style="left:258px;top:57px;width:1px;height:1px;background:#9aa6b8"></div>
<div class="a" style="left:335px;top:44px;width:1px;height:13px;background:#f6f6f6"></div><div class="a" style="left:336px;top:44px;width:1px;height:13px;background:#d2d5dc"></div><div class="a" style="left:336px;top:57px;width:1px;height:1px;background:#9aa6b8"></div>
<div class="a" style="left:413px;top:44px;width:1px;height:13px;background:#f6f6f6"></div><div class="a" style="left:414px;top:44px;width:1px;height:13px;background:#d2d5dc"></div><div class="a" style="left:414px;top:57px;width:1px;height:1px;background:#9aa6b8"></div>
<!-- back / exit / cancel -->
<svg class="a" style="left:266px;top:41px" width="20" height="18" viewBox="0 0 20 18"><defs><linearGradient id="g1" x1="0" y1="0" x2="0" y2="1"><stop offset="0" stop-color="#4fb02a"/><stop offset=".6" stop-color="#2b8230"/><stop offset="1" stop-color="#1b5c22"/></linearGradient><linearGradient id="g2" x1="0" y1="0" x2=".3" y2="1"><stop offset="0" stop-color="#ffe81c"/><stop offset=".55" stop-color="#f9c916"/><stop offset="1" stop-color="#ee8a12"/></linearGradient><linearGradient id="g3" x1="0" y1="0" x2="0" y2="1"><stop offset="0" stop-color="#ff2222"/><stop offset=".6" stop-color="#dc1228"/><stop offset="1" stop-color="#a30d1e"/></linearGradient></defs><circle cx="10.300" cy="10.500" r="7" fill="#aea2d8"/><circle cx="8.500" cy="8.500" r="7" fill="url(#g1)" stroke="#111" stroke-width="1.100"/><path d="M2.400 8a6 6 0 0 0 4 6.300" stroke="#2a90b0" stroke-width="1.600" fill="none"/><circle cx="6.500" cy="4.300" r="1" fill="#fff"/><path d="M5.800 9L10.800 4V6.600H16.600V11.400H10.800V14Z" fill="#fff" stroke="#111" stroke-width="1.100"/></svg>
<svg class="a" style="left:288px;top:41px" width="20" height="18" viewBox="0 0 20 18"><circle cx="10.300" cy="10.500" r="7" fill="#aea2d8"/><circle cx="8.500" cy="8.500" r="7" fill="url(#g2)" stroke="#111" stroke-width="1.100"/><circle cx="6.500" cy="4.300" r="1" fill="#fff"/><path d="M8.700 3.300L13.900 8H11.700V11H13.300V14.200H5.500V11H6.800V8H4.500Z" fill="#fff" stroke="#111" stroke-width="1.100"/></svg>
<svg class="a" style="left:310px;top:41px" width="20" height="18" viewBox="0 0 20 18"><circle cx="10.300" cy="10.500" r="7" fill="#aea2d8"/><circle cx="8.500" cy="8.500" r="7" fill="url(#g3)" stroke="#111" stroke-width="1.100"/><circle cx="6.500" cy="4.500" r="1" fill="#fff"/><path d="M7 7l7.500 7.500M14.500 7l-7.500 7.500" stroke="#111" stroke-width="3.400"/><path d="M7 7l7.500 7.500M14.500 7l-7.500 7.500" stroke="#fff" stroke-width="1.500"/></svg>
<!-- print -->
<svg class="a" style="left:344px;top:41px" width="17" height="17" viewBox="0 0 17 17"><path d="M15.500 4.500v11h-11" stroke="#a89fd4" stroke-width="1" fill="none"/><path d="M2.700 10.500V1.700H11.300L13.400 3.800V10.500Z" fill="#fff" stroke="#111" stroke-width="1.300"/><path d="M11 2v2.500h2.500" fill="#cfe0f6" stroke="#111" stroke-width=".9"/><rect x="1.600" y="10.400" width="13" height="3.300" rx=".8" fill="#fff" stroke="#111" stroke-width="1.300"/><path d="M2.500 12.800h11.200" stroke="#9db4e6" stroke-width="1"/><rect x="2.700" y="13.800" width="10.800" height="2" fill="#cfc6ec" stroke="#111" stroke-width="1.100"/></svg>
<!-- binoculars -->
<svg class="a" style="left:366px;top:41px" width="18" height="17" viewBox="0 0 18 17"><path d="M2.500 1.500H6.500V6.500H10.500V1.500H14.500V4.500H15.500V15.500H10.500V11.500H6.500V15.500H1.500V4.500H2.500Z" fill="#a3bde2" stroke="#607e8e" stroke-width="1"/><path d="M3 5v10M12 2v13" stroke="#dce7f6" stroke-width="1"/><path d="M4.500 2v13M13.500 5v10" stroke="#b3a6d4" stroke-width="1"/><path d="M2 16.500h5M11 16.500h5.500M16.500 6v10" stroke="#95b2da" stroke-width="1"/></svg>
<svg class="a" style="left:388px;top:41px" width="19" height="17" viewBox="0 0 19 17"><path d="M2.500 1.500H6.500V6.500H10.500V1.500H14.500V4.500H15.500V15.500H10.500V11.500H6.500V15.500H1.500V4.500H2.500Z" fill="#a3bde2" stroke="#607e8e" stroke-width="1"/><path d="M3 5v10M12 2v8" stroke="#dce7f6" stroke-width="1"/><path d="M4.500 2v13M13.500 5v4" stroke="#b3a6d4" stroke-width="1"/><path d="M12 8.500h2.500v2.500h2.500v2.500h-2.500v2.500h-2.500v-2.500h-2.500v-2.500h2.500z" fill="#e6edf8" stroke="#607e8e" stroke-width=".9"/></svg>
<!-- page icons -->
<svg class="a" style="left:422px;top:41px" width="18" height="16" viewBox="0 0 18 16"><path d="M6.500 3h5.800l3.200 3.200v8.300h-9z" fill="#e4edfa" stroke="#111" stroke-width="1.100"/><path d="M12.300 3v3.200h3.200" fill="#fff" stroke="#111" stroke-width="1"/><path d="M15 6.500v7.500h-8" fill="none" stroke="#111" stroke-width="1.200"/><path d="M7.500 13.200h3" stroke="#c3bce6" stroke-width="1.200"/><path d="M5 1.300l3.500 3.300h-2v2.200h-3v-2.200h-2z" fill="#ffee08" stroke="#111" stroke-width=".9"/><path d="M5 7.400l3.500 3.300h-2v1.800h-3v-1.800h-2z" fill="#ffee08" stroke="#111" stroke-width=".9"/></svg>
<svg class="a" style="left:444px;top:41px" width="18" height="16" viewBox="0 0 18 16"><path d="M6.500 3h5.800l3.200 3.200v8.300h-9z" fill="#e4edfa" stroke="#111" stroke-width="1.100"/><path d="M12.300 3v3.200h3.200" fill="#fff" stroke="#111" stroke-width="1"/><path d="M15 6.500v7.500h-8" fill="none" stroke="#111" stroke-width="1.200"/><path d="M7.500 13.200h3" stroke="#c3bce6" stroke-width="1.200"/><path d="M5 1.300l3.500 3.300h-2.200v5h-2.600v-5h-2.200z" fill="#ffee08" stroke="#111" stroke-width=".9"/></svg>
<svg class="a" style="left:468px;top:43px" width="18" height="13" viewBox="0 0 18 13"><path d="M1.500 1.500v8l4-4z" fill="#fff" stroke="#3d6ea8" stroke-width="1"/><rect x="8" y="1" width="9" height="11" fill="#111"/><rect x="9" y="2" width="7" height="9" fill="#fff"/><rect x="10" y="3" width="5" height="1" fill="#f0d800"/><rect x="9.500" y="5" width="6" height="2" fill="#f0d800"/><rect x="10" y="8" width="5" height="1" fill="#222"/><rect x="10" y="10" width="5" height=".6" fill="#555"/></svg>

<!-- left/right window borders below chrome -->
<div class="a" style="left:0;top:66px;width:1px;height:440px;background:#636363"></div>
<div class="a" style="left:1px;top:66px;width:1px;height:440px;background:#cfcfcf"></div>
<div class="a" style="left:614px;top:1px;width:1px;height:505px;background:#505050"></div>
<div class="a" style="left:613px;top:1px;width:1px;height:505px;background:#b4b4b4"></div>
<div class="a" style="left:612px;top:1px;width:1px;height:63px;background:#d2e0f1"></div>
<div class="a" style="left:611px;top:129px;width:2px;height:374px;background:#f9f9f9"></div>
<div class="a" style="left:0;top:504px;width:615px;height:2px;background:#3a3a3a"></div>
<div class="a" style="left:2px;top:503px;width:611px;height:1px;background:#bdbdbd"></div>

<!-- title -->
<div class="a" style="left:2px;top:66px;width:611px;height:30px;background:#fff"></div>
<div class="a" style="left:14px;top:70px;letter-spacing:.35px;font-size:18.700px;line-height:24px;font-weight:bold;color:#2c5f97;white-space:nowrap">New Entries: Overview of Added Entries</div>
<div class="a" style="left:2px;top:96px;width:611px;height:1px;background:#1f5a94"></div>
<div class="a" style="left:2px;top:97px;width:611px;height:1px;background:#fff"></div>
<div class="a" style="left:2px;top:98px;width:611px;height:28px;background:#a6c2e7"></div>
<div class="a" style="left:2px;top:98px;width:611px;height:1px;background:#c6daf1"></div>
<div class="a" style="left:2px;top:98px;width:2px;height:28px;background:#c6d9ef"></div>
<div class="a" style="left:2px;top:126px;width:611px;height:1px;background:#dde8f5"></div>
<div class="a" style="left:2px;top:127px;width:611px;height:1px;background:#fff"></div>
<div class="a" style="left:2px;top:128px;width:611px;height:1px;background:#e6edf6"></div>
<div class="a" style="left:611px;top:98px;width:2px;height:28px;background:#c8dbf0"></div>
<div class="a" style="left:609px;top:126px;width:2px;height:2px;background:#ffe866"></div>
<div class="a" style="left:609px;top:130px;width:2px;height:1px;background:#ffe866"></div>

<!-- app toolbar buttons -->
<div class="tb" style="left:14px"><svg style="display:block" width="18" height="18" viewBox="0 0 18 18"><path d="M4.800 15.600l1-3.800l8-7.600l2.800 2.800l-8 7.600z" fill="#f5a21a" stroke="#111" stroke-width=".9"/><path d="M7.500 12.500l6.500-6.200" stroke="#fff3d0" stroke-width="1.200"/><path d="M13.800 4.200l2.800 2.800l1-1.300l-2.400-2.500z" fill="#e9a0b4" stroke="#111" stroke-width=".8"/><path d="M12.800 5.200l2.800 2.800" stroke="#6d8fd0" stroke-width="1.200"/><path d="M4.800 15.600l.8-2.800l2 2z" fill="#222"/><circle cx="3.200" cy="5.200" r="1.600" fill="none" stroke="#111" stroke-width=".9"/><circle cx="7" cy="6.600" r="1.600" fill="none" stroke="#111" stroke-width=".9"/><path d="M2.500 3.500q1-2 2.500-1M8 5.200l3.500-1" fill="none" stroke="#111" stroke-width=".8"/></svg></div>
<div class="tb" style="left:38px"><svg style="display:block" width="18" height="18" viewBox="0 0 18 18"><rect x="1.500" y="2.500" width="12" height="13" fill="#fff" stroke="#111" stroke-width="1.200"/><rect x="3.500" y="4.5" width="8" height="2" fill="#eef1f9" stroke="#8d8fcc" stroke-width=".8"/><rect x="3" y="8" width="9" height="2.6" fill="#6f9400"/><rect x="8" y="8" width="4" height="2.6" fill="#9ac11c" fill-opacity=".7"/><rect x="3.500" y="12.5" width="8" height="2" fill="#eef1f9" stroke="#8d8fcc" stroke-width=".8"/><rect x="7.500" y="11" width="9.500" height="3.600" fill="#ee0f1a" stroke="#111" stroke-width=".9"/></svg></div>
<div class="tb" style="left:62px"><svg style="display:block" width="18" height="18" viewBox="0 0 18 18"><rect x="1.500" y="2.500" width="12" height="13" fill="#fff" stroke="#111" stroke-width="1.200"/><rect x="3" y="4" width="9" height="2.6" fill="#6f9400"/><rect x="8" y="4" width="4" height="2.6" fill="#9ac11c" fill-opacity=".7"/><rect x="3" y="7.7" width="9" height="2.6" fill="#6f9400"/><rect x="8" y="7.7" width="4" height="2.6" fill="#9ac11c" fill-opacity=".7"/><rect x="3" y="11.4" width="9" height="2.6" fill="#6f9400"/><rect x="8" y="11.4" width="4" height="2.6" fill="#9ac11c" fill-opacity=".7"/><path d="M10.500 7.500v9l5.300-3.800z" fill="#fff" stroke="#111" stroke-width=".9"/></svg></div>
<div class="tb" style="left:86px"><svg style="display:block" width="18" height="18" viewBox="0 0 18 18"><rect x="1.500" y="2.500" width="12" height="13" fill="#fff" stroke="#111" stroke-width="1.200"/><rect x="3" y="4" width="9" height="7" fill="#6f9400"/><rect x="8" y="4" width="4" height="7" fill="#9ac11c" fill-opacity=".7"/><rect x="3.500" y="12.5" width="8" height="2" fill="#eef1f9" stroke="#8d8fcc" stroke-width=".8"/><path d="M10.500 7.500v9l5.300-3.800z" fill="#fff" stroke="#111" stroke-width=".9"/></svg></div>
<div class="tb" style="left:110px"><svg style="display:block" width="18" height="18" viewBox="0 0 18 18"><rect x="1.500" y="2.500" width="12" height="13" fill="#fff" stroke="#111" stroke-width="1.200"/><rect x="3.500" y="4.5" width="8" height="2" fill="#eef1f9" stroke="#8d8fcc" stroke-width=".8"/><rect x="3.500" y="8.5" width="8" height="2" fill="#eef1f9" stroke="#8d8fcc" stroke-width=".8"/><rect x="3.500" y="12.5" width="8" height="2" fill="#eef1f9" stroke="#8d8fcc" stroke-width=".8"/><path d="M10.500 7.500v9l5.300-3.800z" fill="#fff" stroke="#111" stroke-width=".9"/></svg></div>

<!-- group frame -->
<div class="a" style="left:5px;top:137px;width:591px;height:262px;border:1px solid #5685b8;box-sizing:border-box"></div>
<div class="a" style="left:6px;top:138px;width:589px;height:1px;background:#fff"></div>
<div class="a" style="left:6px;top:138px;width:1px;height:259px;background:#fff"></div>
<div class="a" style="left:6px;top:397px;width:589px;height:1px;background:#fbfbfb"></div>

<!-- table body -->
<div class="a" style="left:25px;top:159px;width:492px;height:218px;background:#fff"></div>
<div class="a" style="left:517px;top:159px;width:39px;height:218px;background:#dbe6f4"></div>
<div class="sel" style="top:159px"></div>
<div class="gl" style="left:25px;top:179px;width:531px;height:1px"></div>
<div class="cb" style="top:163px"></div>
<div class="sel" style="top:179px"></div>
<div class="gl" style="left:25px;top:199px;width:531px;height:1px"></div>
<div class="cb" style="top:183px"></div>
<svg class="ck" style="left:26px;top:182px" width="12" height="13" viewBox="0 0 12 13"><path d="M7 2.500h-6.500v9h9v-4.300" fill="none" stroke="#2a6099" stroke-width="1"/><path d="M3.200 5.300l2.100 3.300l5.500-6.300" fill="none" stroke="#1a1a3a" stroke-width="1.300"/></svg>
<div class="sel" style="top:199px"></div>
<div class="gl" style="left:25px;top:219px;width:531px;height:1px"></div>
<div class="cb" style="top:203px"></div>
<svg class="ck" style="left:26px;top:202px" width="12" height="13" viewBox="0 0 12 13"><path d="M7 2.500h-6.500v9h9v-4.300" fill="none" stroke="#2a6099" stroke-width="1"/><path d="M3.200 5.300l2.100 3.300l5.500-6.300" fill="none" stroke="#1a1a3a" stroke-width="1.300"/></svg>
<div class="sel" style="top:219px"></div>
<div class="gl" style="left:25px;top:239px;width:531px;height:1px"></div>
<div class="cb" style="top:223px"></div>
<svg class="ck" style="left:26px;top:222px" width="12" height="13" viewBox="0 0 12 13"><path d="M7 2.500h-6.500v9h9v-4.300" fill="none" stroke="#2a6099" stroke-width="1"/><path d="M3.200 5.300l2.100 3.300l5.500-6.300" fill="none" stroke="#1a1a3a" stroke-width="1.300"/></svg>
<div class="sel" style="top:239px"></div>
<div class="gl" style="left:25px;top:259px;width:531px;height:1px"></div>
<div class="cb" style="top:243px"></div>
<svg class="ck" style="left:26px;top:242px" width="12" height="13" viewBox="0 0 12 13"><path d="M7 2.500h-6.500v9h9v-4.300" fill="none" stroke="#2a6099" stroke-width="1"/><path d="M3.200 5.300l2.100 3.300l5.500-6.300" fill="none" stroke="#1a1a3a" stroke-width="1.300"/></svg>
<div class="sel" style="top:259px"></div>
<div class="gl" style="left:25px;top:279px;width:531px;height:1px"></div>
<div class="cb" style="top:263px"></div>
<svg class="ck" style="left:26px;top:262px" width="12" height="13" viewBox="0 0 12 13"><path d="M7 2.500h-6.500v9h9v-4.300" fill="none" stroke="#2a6099" stroke-width="1"/><path d="M3.200 5.300l2.100 3.300l5.500-6.300" fill="none" stroke="#1a1a3a" stroke-width="1.300"/></svg>
<div class="sel" style="top:279px"></div>
<div class="gl" style="left:25px;top:299px;width:531px;height:1px"></div>
<div class="cb" style="top:283px"></div>
<svg class="ck" style="left:26px;top:282px" width="12" height="13" viewBox="0 0 12 13"><path d="M7 2.500h-6.500v9h9v-4.300" fill="none" stroke="#2a6099" stroke-width="1"/><path d="M3.200 5.300l2.100 3.300l5.500-6.300" fill="none" stroke="#1a1a3a" stroke-width="1.300"/></svg>
<div class="sel" style="top:299px"></div>
<div class="gl" style="left:25px;top:319px;width:531px;height:1px"></div>
<div class="cb" style="top:303px"></div>
<svg class="ck" style="left:26px;top:302px" width="12" height="13" viewBox="0 0 12 13"><path d="M7 2.500h-6.500v9h9v-4.300" fill="none" stroke="#2a6099" stroke-width="1"/><path d="M3.200 5.300l2.100 3.300l5.500-6.300" fill="none" stroke="#1a1a3a" stroke-width="1.300"/></svg>
<div class="sel" style="top:319px"></div>
<div class="gl" style="left:25px;top:339px;width:531px;height:1px"></div>
<div class="cb" style="top:323px"></div>
<svg class="ck" style="left:26px;top:322px" width="12" height="13" viewBox="0 0 12 13"><path d="M7 2.500h-6.500v9h9v-4.300" fill="none" stroke="#2a6099" stroke-width="1"/><path d="M3.200 5.300l2.100 3.300l5.500-6.300" fill="none" stroke="#1a1a3a" stroke-width="1.300"/></svg>
<div class="sel" style="top:339px"></div>
<div class="gl" style="left:25px;top:359px;width:531px;height:1px"></div>
<div class="cb" style="top:343px"></div>
<svg class="ck" style="left:26px;top:342px" width="12" height="13" viewBox="0 0 12 13"><path d="M7 2.500h-6.500v9h9v-4.300" fill="none" stroke="#2a6099" stroke-width="1"/><path d="M3.200 5.300l2.100 3.300l5.500-6.300" fill="none" stroke="#1a1a3a" stroke-width="1.300"/></svg>
<div class="sel" style="top:359px;height:16px;border-bottom:1px solid #a9c6df"></div>
<div class="cb" style="top:362px"></div>
<svg class="ck" style="left:26px;top:361px" width="12" height="13" viewBox="0 0 12 13"><path d="M7 2.500h-6.500v9h9v-4.300" fill="none" stroke="#2a6099" stroke-width="1"/><path d="M3.200 5.300l2.100 3.300l5.500-6.300" fill="none" stroke="#1a1a3a" stroke-width="1.300"/></svg>
<div class="gl" style="left:86px;top:159px;width:1px;height:218px"></div>
<div class="gl" style="left:371px;top:159px;width:1px;height:218px"></div>
<div class="gl" style="left:516px;top:159px;width:1px;height:218px"></div>
<div class="gl" style="left:556px;top:159px;width:1px;height:218px"></div>
<svg class="a" style="left:531px;top:164px" width="11" height="11" viewBox="0 0 11 11"><path d="M2.200 4.800l2.500 2.800l4.200-5.200" fill="none" stroke="#1f1f3a" stroke-width="2"/></svg>

<!-- header cells -->
<div class="sel" style="top:140px;height:17px"></div><div class="a" style="left:7px;top:158px;width:18px;height:1px;background:#f1f5fa"></div>
<div class="a" style="left:25px;top:140px;width:1px;height:19px;background:#5a5a5a"></div>
<div class="hc" style="left:26px;width:58px"><span style="left:1px">Product</span></div>
<div class="hc" style="left:87px;width:282px"><span style="left:1px;letter-spacing:.4px">Text</span></div>
<div class="hc" style="left:372px;width:142px"><span style="left:1px;letter-spacing:.27px">RFC destination</span></div>
<div class="hc" style="left:517px;width:37px;color:#111"><span style="left:-0.500px;letter-spacing:-0.050px">Active</span></div>

<!-- row 1 content -->
<div class="a" style="left:26px;top:163px;font-family:'Liberation Mono',monospace;font-size:12px;letter-spacing:-0.200px;white-space:nowrap">00002310</div>
<div class="a" style="left:87px;top:163px;white-space:nowrap">Latihan</div>
<svg class="a" style="left:517px;top:160px" width="39" height="19" viewBox="0 0 39 19"><rect x=".5" y=".5" width="38" height="18" fill="none" stroke="#222" stroke-width="1" stroke-dasharray="2 2"/></svg>
<!-- table settings icon -->
<svg class="a" style="left:575px;top:139px" width="19" height="19" viewBox="0 0 19 19"><rect x=".5" y=".5" width="18" height="18" fill="#eef3fa" stroke="#4b7db3"/><rect x="2" y="2" width="15" height="15" fill="#111"/><rect x="3" y="3" width="13" height="13" fill="#fff"/><rect x="3" y="3" width="13" height="3" fill="#4f86d8"/><rect x="3" y="6" width="4" height="10" fill="#ffe800"/><rect x="7" y="3" width="1" height="3" fill="#9dbbe8"/><rect x="10" y="3" width="1.500" height="13" fill="#9a9aa8"/><rect x="14" y="3" width="1.500" height="13" fill="#a8a8b4"/><rect x="11.500" y="3" width="2.500" height="3" fill="#4f86d8"/></svg>
<!-- vertical scrollbar -->
<div class="sb" style="left:577px;top:161px"><svg width="13" height="13" viewBox="0 0 13 13" style="display:block"><path d="M4 9l3.500-4.300l3.500 4.300z" fill="#c3d3e8"/><path d="M2.800 8.200l3.700-4.600l3.700 4.600z" fill="#1f2340"/></svg></div>
<div class="sb" style="left:577px;top:179px"><svg width="13" height="13" viewBox="0 0 13 13" style="display:block"><path d="M4 5.800l3.500 4.300l3.500-4.300z" fill="#c3d3e8"/><path d="M2.800 4.800l3.700 4.600l3.700-4.600z" fill="#1f2340"/></svg></div>
<div class="a" style="left:577px;top:197px;width:15px;height:143px;background:#95b0c4;border:1px solid #2f6496;box-sizing:border-box"></div>
<div class="a" style="left:578px;top:198px;width:13px;height:15px;background:#fff;border-right:1px solid #999;border-bottom:1px solid #999;box-sizing:border-box"></div>
<div class="a" style="left:577px;top:213px;width:15px;height:1px;background:#2f6496"></div>
<div class="sb" style="left:577px;top:343px"><svg width="13" height="13" viewBox="0 0 13 13" style="display:block"><path d="M4 9l3.500-4.300l3.500 4.300z" fill="#c3d3e8"/><path d="M2.800 8.200l3.700-4.600l3.700 4.600z" fill="#1f2340"/></svg></div>
<div class="sb" style="left:577px;top:361px"><svg width="13" height="13" viewBox="0 0 13 13" style="display:block"><path d="M4 5.800l3.500 4.300l3.500-4.300z" fill="#c3d3e8"/><path d="M2.800 4.800l3.700 4.600l3.700-4.600z" fill="#1f2340"/></svg></div>
<!-- horizontal scrollbar -->
<div class="sb" style="left:88px;top:380px"><svg width="13" height="13" viewBox="0 0 13 13" style="display:block"><path d="M8.900 3.300l-4.400 4.300l4.400 4.300z" fill="#bdd0e8"/><path d="M8 2.300l-4.400 4.300l4.400 4.300z" fill="#1f2340"/></svg></div>
<div class="sb" style="left:106px;top:380px"><svg width="13" height="13" viewBox="0 0 13 13" style="display:block"><path d="M5.900 3.300l4.400 4.300l-4.400 4.300z" fill="#bdd0e8"/><path d="M5 2.300l4.400 4.300l-4.400 4.300z" fill="#1f2340"/></svg></div>
<div class="a" style="left:124px;top:380px;width:413px;height:15px;background:#95b0c4;border:1px solid #2f6496;box-sizing:border-box"></div>
<div class="a" style="left:125px;top:381px;width:136px;height:13px;background:#fff;border-right:1px solid #999;border-bottom:1px solid #999;box-sizing:border-box"></div>
<div class="a" style="left:261px;top:380px;width:1px;height:15px;background:#2f6496"></div>
<div class="sb" style="left:540px;top:380px"><svg width="13" height="13" viewBox="0 0 13 13" style="display:block"><path d="M8.900 3.300l-4.400 4.300l4.400 4.300z" fill="#bdd0e8"/><path d="M8 2.300l-4.400 4.300l4.400 4.300z" fill="#1f2340"/></svg></div>
<div class="sb" style="left:558px;top:380px"><svg width="13" height="13" viewBox="0 0 13 13" style="display:block"><path d="M5.900 3.300l4.400 4.300l-4.400 4.300z" fill="#bdd0e8"/><path d="M5 2.300l4.400 4.300l-4.400 4.300z" fill="#1f2340"/></svg></div>

<!-- Position button -->
<div class="a" style="left:230px;top:431px;width:148px;height:23px;box-sizing:border-box;border-top:1px solid #fafafa;border-left:1px solid #fafafa"></div>
<div class="a" style="left:231px;top:432px;width:146px;height:21px;box-sizing:border-box;background:#f4e0a8;border:1px solid #5e5e5e;border-right:2px solid #5c5c5c;border-bottom:2px solid #5c5c5c;box-shadow:inset 1px 1px 0 #fdf3cf"></div>
<svg class="a" style="left:234px;top:434px" width="17" height="17" viewBox="0 0 17 17"><rect x="2.500" y="1.500" width="13" height="14" fill="#efe3b5" stroke="#bfab7a"/><rect x="9" y="2" width="6" height="13" fill="#dccaa0"/><path d="M9.500 5.500h5M9.500 11.500h5" stroke="#c4ac6c"/><path d="M3 5.500h4.500M5.500 3.500l2 2l-2 2" fill="none" stroke="#cdbd8c" stroke-width=".9"/><path d="M1.500 10.300h3v-1.500l3.200 2.700l-3.200 2.700v-1.500h-3z" fill="#f8e25a" stroke="#b8a468" stroke-width=".7"/></svg>
<div class="a" style="left:286px;top:436px;color:#6c8fb3;white-space:nowrap">Position...</div>
<div class="a" style="left:434px;top:436px;white-space:nowrap;letter-spacing:-0.050px">Entry 0 of 0</div>

<!-- status bar -->
<svg class="a" style="left:12px;top:476px" width="593" height="20" viewBox="0 0 593 20">
<path d="M.5 .5h590.500l-19 19h-571.500z" fill="#dbe6f4" stroke="#5f88b8"/>
<path d="M398.500 .5v19M456.500 .5v19M513.500 .5v19M545.500 .5v19M570.500 .5v19" stroke="#5f88b8"/>
<path d="M572 19.500L591 .5" stroke="#8f9aa8" stroke-width="1.200"/>
<path d="M387.500 5.500v10l5.500-5z" fill="#fff" stroke="#6c8fb3"/>
<g stroke-width="1.300" fill="none"><path d="M579 19.500l12-12M583 19.500l8-8M587 19.500l4-4" stroke="#dbe6f4"/><path d="M577 19.500l14-14" stroke="#4a7ab0" stroke-dasharray="1.420 1.420"/><path d="M581 19.500l10-10M585 19.500l6-6M589 19.500l2-2" stroke="#858585" stroke-dasharray="1.420 1.420"/></g>
<path d="M441 16.500h10.500v-12" stroke="#8aa3b4" fill="none"/><rect x="439.500" y="3.500" width="11" height="12" fill="#fbfdff" stroke="#23233f" stroke-width="1.100"/><path d="M441 6l3.200 2.500l-3.200 2.500z" fill="#111"/><path d="M445 6.500h4M445 10.500h4M445 12.500h4" stroke="#111"/><rect x="444.500" y="7.500" width="5" height="2" fill="#111" stroke="#f4e400" stroke-width="1"/>
</svg>
<div class="a" style="left:416px;top:479px;white-space:nowrap">BF24</div>
<div class="a" style="left:474px;top:479px;white-space:nowrap;letter-spacing:.5px">mil-ides</div>
<div class="a" style="left:531px;top:479px;white-space:nowrap">INS</div>
<!-- bottom ellipse -->
<svg class="a" style="left:12px;top:499px" width="30" height="5" viewBox="0 0 30 5"><ellipse cx="14.500" cy="9" rx="13" ry="7.500" fill="#c6d6e6" stroke="#2f6496" stroke-width="1.200"/></svg>

</body></html>
